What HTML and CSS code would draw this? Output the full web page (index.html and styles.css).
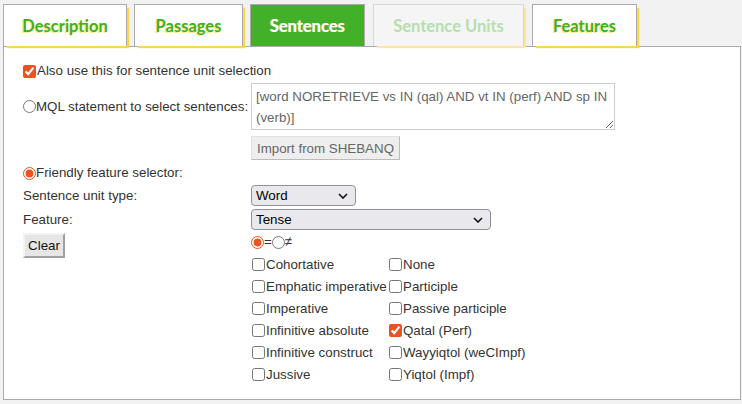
FILE: index.html
```html
<!DOCTYPE html>
<html lang="en">
<head>
<meta charset="utf-8">
<title>Sentences</title>
<link rel="stylesheet" href="styles.css">
</head>
<body>
<div class="page">
  <ul class="tabs">
    <li class="tab t-desc">Description</li>
    <li class="tab t-pass">Passages</li>
    <li class="tab t-sent active">Sentences</li>
    <li class="tab t-units disabled">Sentence Units</li>
    <li class="tab t-feat">Features</li>
  </ul>
  <div class="panel">
    <div class="form">
      <label class="line full"><input type="checkbox" class="ck" checked>Also use this for sentence unit selection</label>

      <label class="line mid"><input type="radio" class="rd" name="mode">MQL statement to select sentences:</label>
      <textarea class="mql">[word NORETRIEVE vs IN (qal) AND vt IN (perf) AND sp IN (verb)]</textarea>

      <div></div>
      <div class="cell"><button class="btn import">Import from SHEBANQ</button></div>

      <label class="line full friendly"><input type="radio" class="rd" name="mode" checked>Friendly feature selector:</label>

      <span class="line mid">Sentence unit type:</span>
      <div class="cell"><select class="sel short"><option>Word</option></select></div>

      <span class="line mid">Feature:</span>
      <div class="cell"><select class="sel long"><option>Tense</option></select></div>

      <div class="cell"><button class="btn clear">Clear</button></div>
      <div class="values">
        <div class="line eq"><input type="radio" class="rd" name="eq" checked>=<input type="radio" class="rd" name="eq">≠</div>
        <div class="checks">
          <label class="opt"><input type="checkbox" class="ck">Cohortative</label>
          <label class="opt"><input type="checkbox" class="ck">None</label>
          <label class="opt"><input type="checkbox" class="ck">Emphatic imperative</label>
          <label class="opt"><input type="checkbox" class="ck">Participle</label>
          <label class="opt"><input type="checkbox" class="ck">Imperative</label>
          <label class="opt"><input type="checkbox" class="ck">Passive participle</label>
          <label class="opt"><input type="checkbox" class="ck">Infinitive absolute</label>
          <label class="opt"><input type="checkbox" class="ck" checked>Qatal (Perf)</label>
          <label class="opt"><input type="checkbox" class="ck">Infinitive construct</label>
          <label class="opt"><input type="checkbox" class="ck">Wayyiqtol (weCImpf)</label>
          <label class="opt"><input type="checkbox" class="ck">Jussive</label>
          <label class="opt"><input type="checkbox" class="ck">Yiqtol (Impf)</label>
        </div>
      </div>
    </div>
  </div>
</div>
</body>
</html>
```

FILE: styles.css
```css
html, body {
  margin: 0;
  padding: 0;
  background: #f2f2f2;
}
body {
  font-family: "Liberation Sans", Arial, sans-serif;
  font-size: 13.33px;
  color: #333;
}
.page {
  padding: 4px 1px 4px 3px;
  width: 738px;
}
.tabs {
  list-style: none;
  margin: 0;
  padding: 0;
  display: flex;
  gap: 7px;
  height: 42px;
}
.tab {
  box-sizing: border-box;
  height: 42px;
  padding: 0;
  display: flex;
  align-items: center;
  justify-content: center;
  background: #fff;
  border: 1px solid #aaa;
  border-bottom: none;
  box-shadow: 3px 3px 1px -1px #ffd54a;
  font-family: Lato, "Open Sans", sans-serif;
  font-weight: 700;
  font-size: 16.5px;
  color: #3fae2a;
  text-shadow: -1px 1px 0 rgba(255, 214, 0, 0.55);
  white-space: nowrap;
}
.t-desc { width: 124px; }
.t-pass { width: 109px; }
.t-sent { width: 115px; }
.t-units { width: 151px; margin-left: 1px; }
.t-feat { width: 105px; margin-left: 1px; }
.tab.active {
  background: #43b02a;
  color: #fff;
  box-shadow: none;
  text-shadow: -1px 0 0 rgba(255, 235, 120, 0.6);
}
.tab.disabled {
  background: #f5f5f5;
  border-color: #d6d6d6;
  color: #b6deae;
  text-shadow: none;
  box-shadow: 3px 3px 1px -1px #fbe6a8;
}
.panel {
  box-sizing: border-box;
  width: 738px;
  height: 354px;
  background: #fff;
  border: 1px solid #aaa;
  padding: 15px 0 0 19px;
}
.form {
  display: grid;
  grid-template-columns: 228px 1fr;
  row-gap: 3px;
  align-items: start;
}
.line {
  display: flex;
  align-items: center;
  height: 18px;
  line-height: 18px;
  white-space: nowrap;
}
.full {
  grid-column: 1 / 3;
}
.mid {
  align-self: center;
}
.friendly {
  margin-top: 1px;
}
.cell {
  display: flex;
}
.ck, .rd {
  width: 13px;
  height: 13px;
  margin: 0;
  accent-color: #e95420;
  flex: none;
}
.ck {
  margin-right: 1px;
}
.mql {
  box-sizing: border-box;
  width: 364px;
  height: 47px;
  margin: 0;
  padding: 2px 4px;
  border: 1px solid #ccc;
  font-family: "Liberation Sans", Arial, sans-serif;
  font-size: 13.33px;
  line-height: 21px;
  color: #666;
  resize: both;
  display: block;
}
.btn {
  box-sizing: border-box;
  font-family: "Liberation Sans", Arial, sans-serif;
  font-size: 13.33px;
  margin: 0;
  cursor: pointer;
}
.import {
  margin-top: 3px;
  width: 149px;
  height: 24px;
  padding: 0;
  background: #eee;
  color: #666;
  border: 1px solid;
  border-color: #e2e2e2 #bbb #bbb #e2e2e2;
}
.clear {
  width: 42px;
  height: 25px;
  padding: 0;
  background: #e6e6e6;
  color: #111;
  border: 2px solid;
  border-color: #f3f3f3 #a0a0a0 #a0a0a0 #f3f3f3;
}
.sel {
  box-sizing: border-box;
  appearance: none;
  -webkit-appearance: none;
  height: 21px;
  margin: 0;
  padding: 0 0 0 4px;
  border: 1px solid #8f8f9d;
  border-radius: 4px;
  background-color: #e9e9ed;
  background-image: url("data:image/svg+xml;utf8,<svg xmlns='http://www.w3.org/2000/svg' width='10' height='6' viewBox='0 0 10 6'><path d='M1 1l4 4 4-4' fill='none' stroke='%23111' stroke-width='1.6'/></svg>");
  background-repeat: no-repeat;
  background-position: right 7px center;
  font-family: "Liberation Sans", Arial, sans-serif;
  font-size: 13.33px;
  color: #000;
}
.short { width: 105px; }
.long { width: 240px; }
.values {
  display: flex;
  flex-direction: column;
}
.eq {
  color: #333;
}
.checks {
  margin-top: 2px;
  display: grid;
  grid-template-columns: 137px auto;
  grid-auto-rows: 22px;
  padding-left: 1px;
}
.opt {
  display: flex;
  align-items: center;
  white-space: nowrap;
}
```
